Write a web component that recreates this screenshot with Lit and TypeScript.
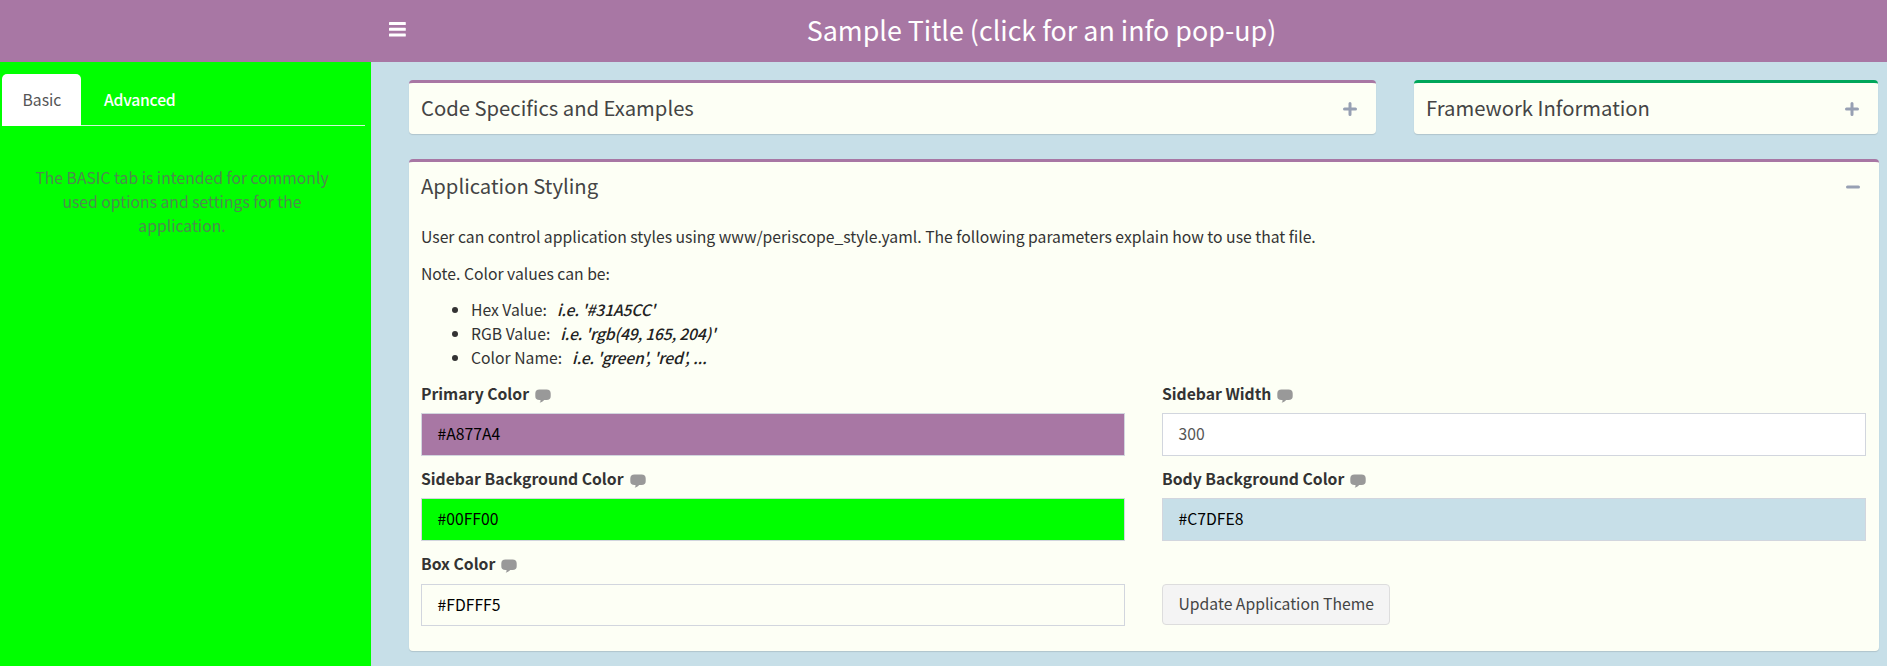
import { LitElement, html, svg, css } from "lit";
import { customElement, property } from "lit/decorators.js";
import { styleMap } from "lit/directives/style-map.js";

const plus = svg`<path d="M7 1.5v11M1.5 7h11" />`;
const minus = svg`<path d="M1.5 7h11" />`;

@customElement("info-box")
class InfoBox extends LitElement {
  static styles = css`
    :host { display: block; }
    .box {
      box-sizing: border-box;
      height: 100%;
      border-top: 3px solid #a877a4;
      border-radius: 4px;
      background: #fdfff5;
      box-shadow: 0 1px 1px rgba(0, 0, 0, 0.12);
    }
    .green { border-top-color: #00a65a; }
    .head {
      display: flex;
      justify-content: space-between;
      padding: 13px 19.5px 0 12px;
    }
    .open .head { padding-top: 12px; }
    .title {
      margin: 0;
      font-size: 20.25px;
      line-height: 24px;
      font-weight: 400;
      color: #444;
    }
    .tool { width: 14px; height: 14px; margin-top: 5.5px; }
    .tool path { fill: none; stroke: #97a0b3; stroke-width: 3; stroke-linecap: round; }
  `;
  @property() heading = "";
  @property() accent = "";
  @property({ type: Boolean }) open = false;
  render() {
    return html`<section class="box ${this.accent} ${this.open ? "open" : ""}">
      <div class="head">
        <h3 class="title">${this.heading}</h3>
        <svg class="tool" viewBox="0 0 14 14">${this.open ? minus : plus}</svg>
      </div>
      <slot></slot>
    </section>`;
  }
}

@customElement("color-field")
class ColorField extends LitElement {
  static styles = css`
    :host { display: flex; flex-direction: column; }
    .label {
      display: flex;
      gap: 6px;
      flex: 1;
      line-height: 24px;
      font-weight: 700;
      color: #333;
    }
    .icon { width: 16px; height: 14px; margin-top: 7px; fill: #999; }
    .input {
      box-sizing: border-box;
      height: var(--input-height, 43px);
      border: 1px solid #d2d6de;
      padding: 8px 15px 0 15.5px;
      line-height: 24px;
      color: #000;
      background: #fff;
    }
    .plain { color: #555; }
  `;
  @property() label = "";
  @property() value = "";
  render() {
    const isColor = this.value.startsWith("#");
    return html`<div class="label">
        <span>${this.label}</span>
        <svg class="icon" viewBox="0 0 16 14">
          <path d="M4.5.5h7Q15.7.5 15.7 4.5v2.7Q15.7 11 11.5 11H9.2Q7.5 13.1 4.7 13.8Q5.7 12.5 5.5 11H4.5Q.3 11 .3 7.2V4.5Q.3.5 4.5.5z" />
        </svg>
      </div>
      <div class="input ${isColor ? "" : "plain"}" style=${styleMap(isColor ? { background: this.value } : {})}>${this.value}</div>`;
  }
}

@customElement("app-root")
class AppRoot extends LitElement {
  static styles = css`
    :host {
      display: flex;
      flex-direction: column;
      height: 666px;
      overflow: hidden;
      font-family: "Noto Sans CJK SC", "Noto Sans", sans-serif;
      font-size: 15.72px;
      line-height: 24px;
      color: #333;
      background: #c7dfe8;
    }
    .top {
      display: grid;
      grid-template-columns: 371px 1fr;
      height: 62px;
      background: #a877a4;
      color: #fff;
    }
    .nav { grid-column: 2; display: flex; }
    .burger { width: 17px; height: 15px; margin: 22px 0 0 18px; fill: #fff; }
    .title {
      flex: 1;
      margin: 0 227px 0 17px;
      text-align: center;
      font-size: 26.85px;
      line-height: 60px;
      font-weight: 400;
    }
    .main { flex: 1; display: grid; grid-template-columns: 371px 1fr; }
    .side { background: #0f0; }
    .tabs {
      display: flex;
      margin: 12px 6px 0 2px;
      height: 51px;
      border-bottom: 1px solid #d2f5d8;
    }
    .tab { padding: 14px 20px 0 20.5px; }
    .active {
      height: 38px;
      background: #fff;
      color: #555;
      border-radius: 5px 5px 0 0;
    }
    .idle { padding-left: 22.5px; color: #fff; font-weight: 500; letter-spacing: -0.2px; }
    .hint {
      margin: 40px 7px 0 0;
      padding: 0 30px;
      text-align: center;
      color: #4f8a4f;
    }
    .content { padding: 18px 8px 0 38px; }
    .boxes {
      display: grid;
      grid-template-columns: 967px 464px;
      gap: 38px;
      height: 54px;
      margin-bottom: 25px;
    }
    .styling { height: 492px; }
    .body { padding: 27px 13px 0 12px; }
    .text { margin: 0 0 13px; }
    .note { margin: 0 0 12px; }
    .list { margin: 0 0 12px; padding-left: 50px; }
    .example { margin-left: 6.5px; font-weight: 500; font-style: italic; letter-spacing: -0.2px; color: #222; }
    .fields { display: grid; grid-template-columns: 704px 704px; column-gap: 37px; row-gap: 11px; }
    .fields color-field { height: 74px; }
    .fields .last { --input-height: 42px; }
    .update {
      align-self: end;
      justify-self: start;
      box-sizing: border-box;
      height: 41px;
      margin-bottom: 1px;
      padding: 0 15px 2px 15.5px;
      border: 1px solid #ddd;
      border-radius: 4px;
      background: #f4f4f4;
      color: #444;
      font: inherit;
    }
  `;
  render() {
    const li = (name: string, example: string) =>
      html`<li>${name}:&nbsp;<span class="example">${example}</span></li>`;
    return html`
      <header class="top">
        <div class="nav">
          <svg class="burger" viewBox="0 0 17 15">
            <rect width="16.8" height="3" rx=".6" /><rect y="5.8" width="16.8" height="3" rx=".6" /><rect y="11.5" width="16.8" height="3" rx=".6" />
          </svg>
          <h1 class="title">Sample Title (click for an info pop-up)</h1>
        </div>
      </header>
      <div class="main">
        <aside class="side">
          <nav class="tabs"><div class="tab active">Basic</div><div class="tab idle">Advanced</div></nav>
          <p class="hint">The BASIC tab is intended for commonly used options and settings for the application.</p>
        </aside>
        <main class="content">
          <div class="boxes">
            <info-box heading="Code Specifics and Examples"></info-box>
            <info-box heading="Framework Information" accent="green"></info-box>
          </div>
          <info-box class="styling" heading="Application Styling" open>
            <div class="body">
              <p class="text">User can control application styles using www/periscope_style.yaml. The following parameters explain how to use that file.</p>
              <p class="note">Note. Color values can be:</p>
              <ul class="list">
                ${li("Hex Value", "i.e. '#31A5CC'")}
                ${li("RGB Value", "i.e. 'rgb(49, 165, 204)'")}
                ${li("Color Name", "i.e. 'green', 'red', ...")}
              </ul>
              <div class="fields">
                <color-field label="Primary Color" value="#A877A4"></color-field>
                <color-field label="Sidebar Width" value="300"></color-field>
                <color-field label="Sidebar Background Color" value="#00FF00"></color-field>
                <color-field label="Body Background Color" value="#C7DFE8"></color-field>
                <color-field class="last" label="Box Color" value="#FDFFF5"></color-field>
                <button class="update">Update Application Theme</button>
              </div>
            </div>
          </info-box>
        </main>
      </div>`;
  }
}
